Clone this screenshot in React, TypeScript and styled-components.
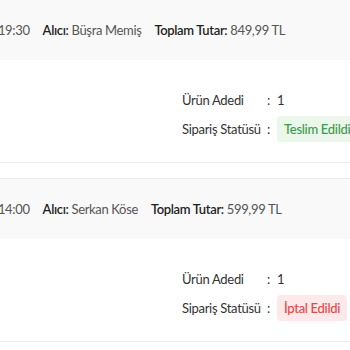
import styled, { createGlobalStyle } from "styled-components";

const GlobalStyle = createGlobalStyle`
  html, body {
    margin: 0;
    padding: 0;
    background: #ffffff;
    overflow: hidden;
  }
  body {
    font-family: Lato, "Open Sans", sans-serif;
    color: #222;
  }
`;

type Order = {
  date: string;
  buyer: string;
  total: string;
  count: number;
  status: "delivered" | "cancelled";
  statusText: string;
};

const orders: Order[] = [
  { date: "12.03.2024 19:30", buyer: "Büşra Memiş", total: "849,99 TL", count: 1, status: "delivered", statusText: "Teslim Edildi" },
  { date: "09.03.2024 14:00", buyer: "Serkan Köse", total: "599,99 TL", count: 1, status: "cancelled", statusText: "İptal Edildi" },
];

const App = () => {
  return (
    <>
      <GlobalStyle />
      <List>
        {orders.map((o) => (
          <Card key={o.date}>
            <CardHeader>
              <HeaderValue>{o.date}</HeaderValue>
              <HeaderItem>
                <HeaderLabel>Alıcı:</HeaderLabel> <HeaderValue>{o.buyer}</HeaderValue>
              </HeaderItem>
              <HeaderItem>
                <HeaderLabel>Toplam Tutar:</HeaderLabel> <HeaderValue>{o.total}</HeaderValue>
              </HeaderItem>
            </CardHeader>
            <CardBody>
              <Details>
                <DetailLabel>Ürün Adedi</DetailLabel>
                <Colon>:</Colon>
                <DetailValue>{o.count}</DetailValue>
                <DetailLabel>Sipariş Statüsü</DetailLabel>
                <Colon>:</Colon>
                <StatusBadge $status={o.status}>{o.statusText}</StatusBadge>
              </Details>
            </CardBody>
          </Card>
        ))}
      </List>
    </>
  );
};

export default App;

const List = styled.div`
  display: flex;
  flex-direction: column;
  gap: 15px;
  width: 560px;
  margin-left: -100px;
  margin-top: -1px;
`;

const Card = styled.div`
  border: 1px solid #ececec;
  border-radius: 6px;
  overflow: hidden;
`;

const CardHeader = styled.div`
  display: flex;
  align-items: center;
  gap: 13px;
  height: 60px;
  padding: 0 31px;
  background: #f9f9f9;
  font-size: 13px;
  letter-spacing: -0.35px;
`;

const HeaderItem = styled.span`
  white-space: nowrap;
`;

const HeaderLabel = styled.span`
  color: #1f1f1f;
  font-weight: 600;
`;

const HeaderValue = styled.span`
  color: #555;
  white-space: nowrap;
`;

const CardBody = styled.div`
  display: flex;
  height: 102px;
  padding: 27px 0 0 281px;
  box-sizing: border-box;
`;

const Details = styled.div`
  display: grid;
  grid-template-columns: 85px 10px auto;
  grid-auto-rows: 26px;
  align-items: center;
  row-gap: 3px;
  font-size: 13px;
  letter-spacing: -0.3px;
  color: #333;
  align-content: start;
`;

const DetailLabel = styled.span`
  white-space: nowrap;
`;

const Colon = styled.span``;

const DetailValue = styled.span``;

const StatusBadge = styled.span<{ $status: "delivered" | "cancelled" }>`
  display: inline-flex;
  align-items: center;
  justify-self: start;
  height: 26px;
  padding: 0 7px;
  border-radius: 4px;
  white-space: nowrap;
  font-weight: 500;
  background: ${(p) => (p.$status === "delivered" ? "#eaf7ea" : "#fde9e9")};
  color: ${(p) => (p.$status === "delivered" ? "#3d9b4b" : "#e3474c")};
`;
